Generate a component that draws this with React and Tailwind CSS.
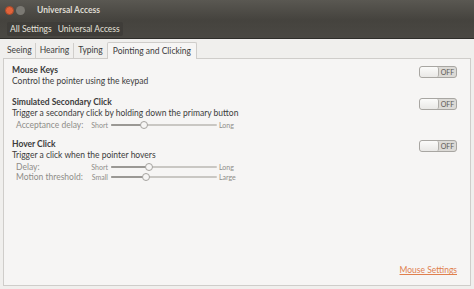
import React from "react";

function Switch() {
  return (
    <div className="flex h-[12px] w-[38px] rounded-[3px] border border-[#a8a6a2] bg-[#dcdad6] overflow-hidden">
      <div className="w-[19px] h-full rounded-[2px] bg-gradient-to-b from-[#fbfbfa] to-[#e9e8e6] border-r border-[#b0aeaa]" />
      <div className="flex-1 flex items-center justify-center text-[7px] text-[#5a5955] leading-none">OFF</div>
    </div>
  );
}

function Slider({ pos }) {
  return (
    <div className="relative w-[106px] h-[8px] flex items-center">
      <div className="w-full h-[2px] bg-[#c9c7c3] rounded" />
      <div className="absolute left-0 h-[2px] bg-[#9a9894] rounded" style={{ width: pos }} />
      <div className="absolute top-0 w-[8px] h-[8px] rounded-full border border-[#a5a39f] bg-[#f6f5f4]" style={{ left: pos - 4 }} />
    </div>
  );
}

function SliderRow({ label, lo, hi, pos }) {
  return (
    <div className="flex items-center pl-[4px] text-[#8f8d89] leading-[10px] whitespace-nowrap">
      <span className="w-[73px]">{label}</span>
      <span className="text-[7px] w-[19px] text-right">{lo}</span>
      <span className="ml-[3px]"><Slider pos={pos} /></span>
      <span className="text-[7px] ml-[2px]">{hi}</span>
    </div>
  );
}

export default function App() {
  const font = { fontFamily: 'Lato, "Open Sans", sans-serif' };
  return (
    <div className="w-[474px] h-[289px] bg-[#f0efed] flex flex-col overflow-hidden" style={font}>
      <div className="h-[20px] bg-gradient-to-b from-[#5a5852] to-[#45433e] flex items-center px-[4px]">
        <div className="w-[9px] h-[9px] rounded-full bg-[#e2633a] border border-[#a94a2a] ml-[1px]" />
        <div className="w-[9px] h-[9px] rounded-full bg-[#7b7973] ml-[2px]" />
        <span className="ml-[12px] text-[8.5px] font-bold text-[#dfdbd2]">Universal Access</span>
      </div>
      <div className="h-[19px] bg-gradient-to-b from-[#45433e] to-[#4a4843] flex items-center px-[7px] border-b border-[#2e2d2a]">
        <div className="flex items-center h-[14px] rounded-[2px] bg-[#3f3d39] px-[3px] gap-[6px] text-[8.5px] text-[#e6e3dc]">
          <span>All Settings</span>
          <span>Universal Access</span>
        </div>
      </div>
      <div className="flex-1 flex flex-col px-[3px] pt-[2px] pb-[3px]">
        <div className="flex items-end h-[17px] text-[8.5px] text-[#3c3c3c] pl-[1px]">
          <div className="px-[3px] h-[15px] flex items-center border-r border-[#d0cecb]">Seeing</div>
          <div className="px-[4px] h-[15px] flex items-center border-r border-[#d0cecb]">Hearing</div>
          <div className="px-[4px] h-[15px] flex items-center">Typing</div>
          <div className="px-[5px] h-[17px] flex items-center border border-b-0 border-[#cfcdca] rounded-t-[2px] bg-[#f6f5f4] relative top-[1px]">Pointing and Clicking</div>
        </div>
        <div className="flex-1 border border-[#cfcdca] bg-[#f6f5f4] flex flex-col px-[8px] pt-[6px] pb-[8px] text-[8.5px] text-[#3c3c3c]">
          <div className="flex justify-between items-start">
            <div className="flex flex-col leading-[11px]">
              <span className="font-bold">Mouse Keys</span>
              <span>Control the pointer using the keypad</span>
            </div>
            <div className="mt-[1px] mr-[5px]"><Switch /></div>
          </div>
          <div className="flex justify-between items-start mt-[10px]">
            <div className="flex flex-col leading-[11px]">
              <span className="font-bold">Simulated Secondary Click</span>
              <span>Trigger a secondary click by holding down the primary button</span>
              <div className="mt-[1px]"><SliderRow label="Acceptance delay:" lo="Short" hi="Long" pos={33} /></div>
            </div>
            <div className="mt-[1px] mr-[5px]"><Switch /></div>
          </div>
          <div className="flex justify-between items-start mt-[9px]">
            <div className="flex flex-col leading-[11px]">
              <span className="font-bold">Hover Click</span>
              <span>Trigger a click when the pointer hovers</span>
              <div className="mt-[1px]"><SliderRow label="Delay:" lo="Short" hi="Long" pos={38} /></div>
              <SliderRow label="Motion threshold:" lo="Small" hi="Large" pos={35} />
            </div>
            <div className="mt-[1px] mr-[5px]"><Switch /></div>
          </div>
          <div className="flex-1" />
          <div className="flex justify-end pr-[5px]">
            <span className="text-[#e0804e] underline">Mouse Settings</span>
          </div>
        </div>
      </div>
    </div>
  );
}
